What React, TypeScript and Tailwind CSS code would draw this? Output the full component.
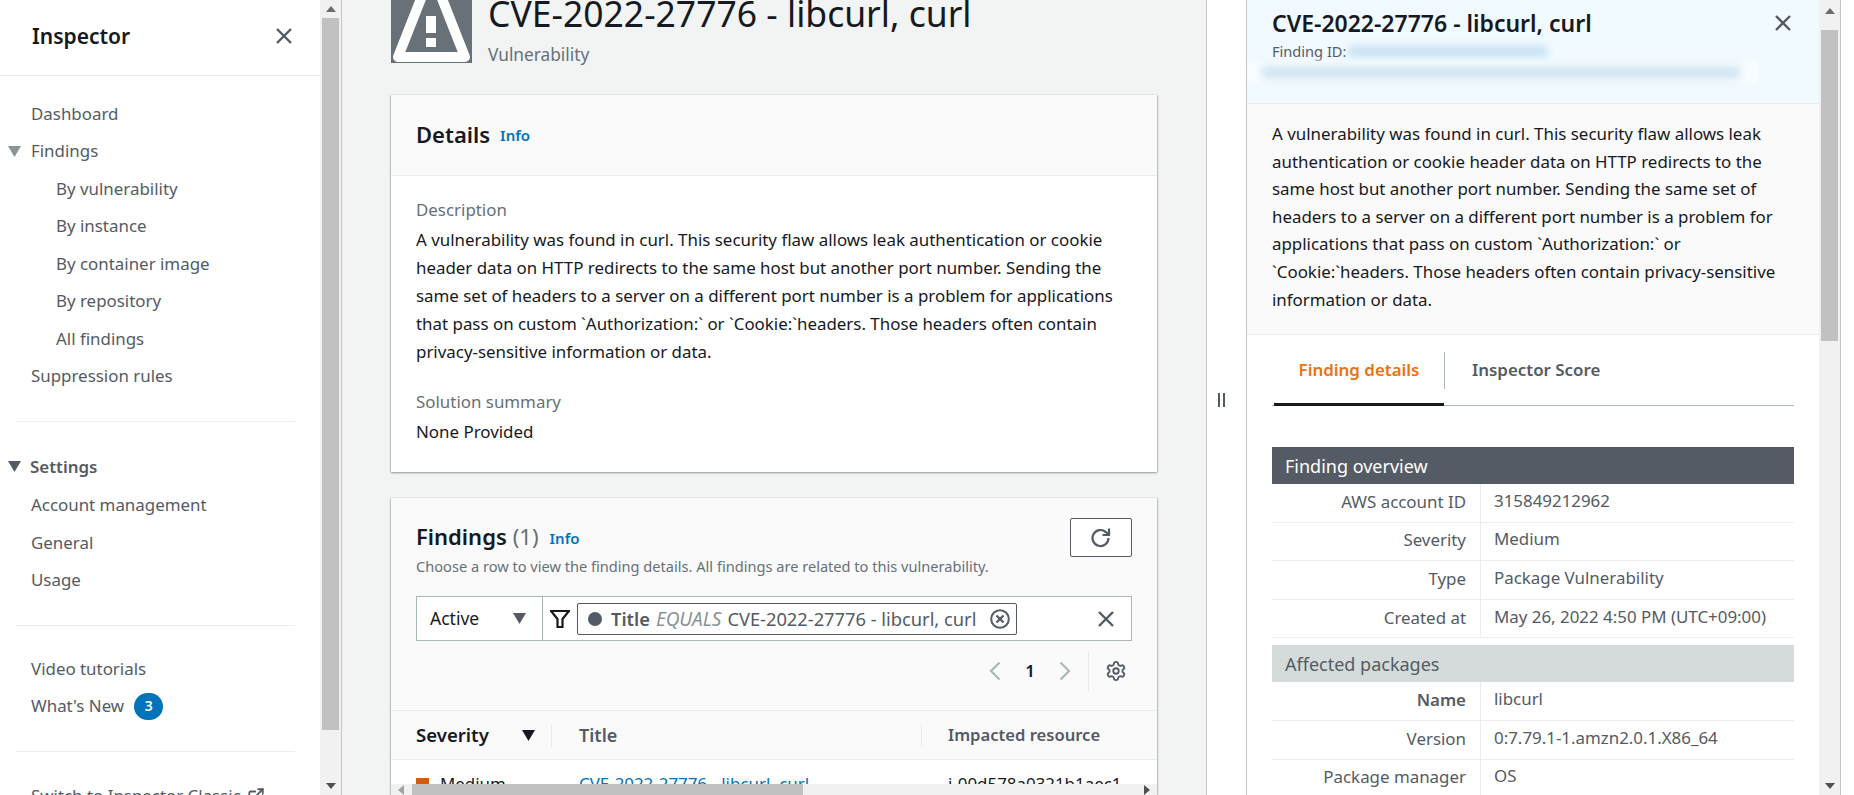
import { ExternalLink, Settings } from "lucide-react";

const subItems = ["By vulnerability", "By instance", "By container image", "By repository", "All findings"];

const overviewRows = [
  ["AWS account ID", "315849212962"],
  ["Severity", "Medium"],
  ["Type", "Package Vulnerability"],
  ["Created at", "May 26, 2022 4:50 PM (UTC+09:00)"],
];

const packageRows = [
  ["Name", "libcurl"],
  ["Version", "0:7.79.1-1.amzn2.0.1.X86_64"],
  ["Package manager", "OS"],
];

function NavLink({ label, indent }: { label: string; indent?: boolean }) {
  return (
    <div className={`h-[37.5px] flex items-center text-[#545b64] ${indent ? "pl-[56px]" : "pl-[31px]"}`}>
      {label}
    </div>
  );
}

function Caret({ className }: { className: string }) {
  return (
    <svg viewBox="0 0 13 11" className={className} fill="currentColor">
      <path d="M0 0h13L6.5 11z" />
    </svg>
  );
}

function CloseIcon({ className }: { className: string }) {
  return (
    <svg viewBox="0 0 18 18" className={className} fill="none" stroke="currentColor" strokeWidth="2.4">
      <path d="M2 2l14 14M16 2L2 16" />
    </svg>
  );
}

function ArrowUp() {
  return (
    <svg viewBox="0 0 10 6" className="w-[10px] h-[6px]" fill="#6b6b6b">
      <path d="M5 0l5 6H0z" />
    </svg>
  );
}

function ArrowDown() {
  return (
    <svg viewBox="0 0 10 6" className="w-[10px] h-[6px]" fill="#505050">
      <path d="M0 0h10L5 6z" />
    </svg>
  );
}

function DetailRow({ label, value, bold }: { label: string; value: string; bold?: boolean }) {
  return (
    <div className="flex h-[38.6px] border-b border-[#eaeded] shrink-0">
      <div className={`w-[209px] pr-[14px] pb-[2px] flex items-center justify-end border-r border-[#eaeded] text-[#545b64] ${bold ? "font-semibold" : ""}`}>
        {label}
      </div>
      <div className="pl-[13px] flex items-center pb-[4px] text-[#545b64]">{value}</div>
    </div>
  );
}

export default function App() {
  return (
    <div className="flex h-screen overflow-hidden bg-white font-['Noto_Sans',sans-serif] text-[16.9px] leading-[28px] text-[#16191f]">
      {/* left nav */}
      <aside className="w-[320px] shrink-0 overflow-hidden">
        <div className="h-[76px] flex items-center justify-between pl-[32px] pr-[27px] pb-[3px] border-b border-[#eaeded]">
          <span className="text-[21px] font-semibold">Inspector</span>
          <CloseIcon className="w-[18px] h-[18px] text-[#545b64]" />
        </div>
        <nav className="pt-[19px]">
          <NavLink label="Dashboard" />
          <div className="h-[37.5px] flex items-center pl-[8px] text-[#545b64]">
            <Caret className="w-[13px] h-[11px] mr-[10px] text-[#879596]" />
            Findings
          </div>
          {subItems.map((s) => (
            <NavLink key={s} label={s} indent />
          ))}
          <NavLink label="Suppression rules" />
          <hr className="mx-[16px] w-[279px] mt-[26px] mb-[27px] border-[#eaeded]" />
          <div className="h-[37.5px] flex items-center pl-[8px] pb-[2px] text-[#545b64] font-semibold">
            <Caret className="w-[13px] h-[11px] mr-[9px] text-[#545b64]" />
            Settings
          </div>
          <NavLink label="Account management" />
          <NavLink label="General" />
          <NavLink label="Usage" />
          <hr className="mx-[16px] w-[279px] mt-[26px] mb-[24px] border-[#eaeded]" />
          <NavLink label="Video tutorials" />
          <div className="h-[37.5px] flex items-center pl-[31px] text-[#545b64]">
            What's New
            <span className="ml-[10px] w-[29px] h-[27px] rounded-full bg-[#0073bb] text-white text-[14px] font-semibold flex items-center justify-center">
              3
            </span>
          </div>
          <hr className="mx-[16px] w-[279px] mt-[26px] mb-[25px] border-[#eaeded]" />
          <div className="h-[37.5px] flex items-center pl-[31px] text-[#545b64]">
            Switch to Inspector Classic
            <ExternalLink className="ml-[6px] w-[18px] h-[18px]" strokeWidth={2.4} />
          </div>
        </nav>
      </aside>

      {/* left scrollbar */}
      <div className="w-[22px] shrink-0 bg-[#f1f1f1] border-r border-[#c6c6c6] flex flex-col items-center">
        <div className="h-[18px] flex items-center justify-center">
          <ArrowUp />
        </div>
        <div className="w-[17px] h-[712px] bg-[#c1c1c1]" />
        <div className="mt-auto h-[18px] flex items-center justify-center">
          <ArrowDown />
        </div>
      </div>

      {/* main column */}
      <main className="w-[865px] shrink-0 h-screen bg-[#f2f3f3] border-r border-[#c6c6c6] pl-[49px] pr-[49px] flex flex-col overflow-hidden">
        <div className="flex h-[100px] -mt-[37px] shrink-0">
          <svg viewBox="0 0 81 100" className="w-[81px] h-[100px] shrink-0 bg-[#687078]">
            <path d="M40.5 9L7 94h67z" fill="none" stroke="white" strokeWidth="10" strokeLinejoin="round" />
            <path d="M35 53h10v17H35zM35 75h10v9H35z" fill="white" />
          </svg>
          <div className="ml-[16px] pt-[20px]">
            <h1 className="text-[35.5px] leading-[60px] text-[#16191f] whitespace-nowrap">CVE-2022-27776 - libcurl, curl</h1>
            <div className="text-[17.3px] text-[#687078] -mt-[2px]">Vulnerability</div>
          </div>
        </div>

        <section className="mt-[32px] h-[377px] shrink-0 bg-white shadow-[0_1px_2px_rgba(0,28,36,0.4),1px_0_1px_rgba(0,28,36,0.1),-1px_0_1px_rgba(0,28,36,0.1)]">
          <div className="h-[81px] bg-[#fafafa] border-b border-[#eaeded] flex items-center pl-[25px] pb-[3px]">
            <h2 className="text-[22px] font-semibold">Details</h2>
            <span className="ml-[10px] mt-[3px] text-[15px] font-semibold text-[#0073bb]">Info</span>
          </div>
          <div className="pl-[25px] pr-[34px] pt-[20px]">
            <div className="text-[#687078]">Description</div>
            <p className="mt-[2px]">
              A vulnerability was found in curl. This security flaw allows leak authentication or cookie header data on HTTP redirects to the same host but another port number. Sending the same set of headers to a server on a different port number is a problem for applications that pass on custom `Authorization:` or `Cookie:`headers. Those headers often contain privacy-sensitive information or data.
            </p>
            <div className="mt-[22px] text-[#687078]">Solution summary</div>
            <div className="mt-[2px]">None Provided</div>
          </div>
        </section>

        <section className="mt-[26px] flex-1 min-h-0 flex flex-col overflow-hidden bg-white shadow-[0_1px_2px_rgba(0,28,36,0.4),1px_0_1px_rgba(0,28,36,0.1),-1px_0_1px_rgba(0,28,36,0.1)]">
          <div className="h-[213px] shrink-0 bg-[#fafafa] border-b border-[#eaeded] px-[25px]">
            <div className="flex justify-between pt-[20px]">
              <div>
                <div className="flex items-center h-[36px]">
                  <h2 className="text-[22px] font-semibold">Findings</h2>
                  <span className="ml-[6px] text-[22px] text-[#687078]">(1)</span>
                  <span className="ml-[11px] mt-[3px] text-[15px] font-semibold text-[#0073bb]">Info</span>
                </div>
                <div className="text-[14.6px] leading-[24px] text-[#687078]">
                  Choose a row to view the finding details. All findings are related to this vulnerability.
                </div>
              </div>
              <button className="w-[62px] h-[39px] bg-white border border-[#545b64] rounded-[2px] flex items-center justify-center text-[#545b64]">
                <svg viewBox="0 0 22 22" className="w-[22px] h-[22px]" fill="none" stroke="currentColor" strokeWidth="2.2">
                  <path d="M18.5 11a8 8 0 1 1-2.6-5.9L18.5 7.5" />
                  <path d="M19 1.5V8h-6.5" />
                </svg>
              </button>
            </div>
            <div className="mt-[18px] h-[45px] bg-white border border-[#aab7b8] flex items-center">
              <div className="w-[126px] h-full border-r border-[#aab7b8] flex items-center justify-between pl-[13px] pr-[16px] pb-[1px] text-[17.5px]">
                Active
                <Caret className="w-[13px] h-[11px] text-[#545b64]" />
              </div>
              <svg viewBox="0 0 20 20" className="ml-[7px] w-[20px] h-[20px] text-[#16191f]" fill="none" stroke="currentColor" strokeWidth="2.2">
                <path d="M1 2h18l-6.5 8v8h-5v-8z" />
              </svg>
              <div className="ml-[7px] w-[440px] h-[32px] border border-[#545b64] rounded-[2px] flex items-center pl-[10px] text-[18.3px] text-[#545b64] whitespace-nowrap">
                <span className="w-[14px] h-[14px] rounded-full bg-[#545b64] mr-[9px]" />
                <span className="font-semibold">Title</span>
                <span className="italic text-[19px] text-[#879596] ml-[6px]">EQUALS</span>
                <span className="ml-[6px]">CVE-2022-27776 - libcurl, curl</span>
                <svg viewBox="0 0 20 20" className="ml-auto mr-[6px] w-[20px] h-[20px]" fill="none" stroke="currentColor" strokeWidth="2">
                  <circle cx="10" cy="10" r="8.8" />
                  <path d="M6.5 6.5l7 7M13.5 6.5l-7 7" strokeWidth="2.4" />
                </svg>
              </div>
              <CloseIcon className="ml-auto mr-[16px] w-[18px] h-[18px] text-[#545b64]" />
            </div>
            <div className="mt-[10px] h-[40px] flex items-center justify-end text-[#16191f]">
              <svg viewBox="0 0 12 20" className="w-[12px] h-[20px]" fill="none" stroke="#aab7b8" strokeWidth="2.2">
                <path d="M10.5 1.5L2 10l8.5 8.5" />
              </svg>
              <span className="mx-[24px] font-semibold">1</span>
              <svg viewBox="0 0 12 20" className="w-[12px] h-[20px]" fill="none" stroke="#aab7b8" strokeWidth="2.2">
                <path d="M1.5 1.5L10 10l-8.5 8.5" />
              </svg>
              <div className="ml-[17px] w-px h-[40px] bg-[#eaeded]" />
              <Settings className="ml-[16px] mr-[5px] w-[22px] h-[22px] text-[#545b64]" strokeWidth={2} />
            </div>
          </div>

          <div className="h-[49px] shrink-0 bg-[#fafafa] border-b border-[#eaeded] flex items-center font-semibold">
            <div className="w-[161px] h-[23px] border-r border-[#eaeded] pl-[25px] flex items-center justify-between pr-[16px] text-[18.6px]">
              Severity
              <Caret className="w-[13px] h-[11px] text-[#16191f]" />
            </div>
            <div className="w-[370px] h-[23px] border-r border-[#eaeded] pl-[27px] flex items-center text-[18px] text-[#545b64]">Title</div>
            <div className="pl-[26px] flex items-center text-[16.6px] text-[#545b64]">Impacted resource</div>
          </div>

          <div className="flex-1 min-h-0 overflow-hidden flex items-start pt-[10px]">
            <div className="w-[161px] pl-[25px] flex items-center">
              <span className="w-[13px] h-[13px] bg-[#d45b07] mr-[11px]" />
              Medium
            </div>
            <div className="w-[370px] pl-[27px] text-[#0073bb] underline whitespace-nowrap">CVE-2022-27776 - libcurl, curl</div>
            <div className="pl-[26px]">i-00d578a0321b1aec1</div>
          </div>

          <div className="h-[11px] shrink-0 bg-[#f1f1f1] flex items-center">
            <svg viewBox="0 0 6 10" className="ml-[7px] w-[6px] h-[10px]" fill="#a3a3a3">
              <path d="M0 5l6-5v10z" />
            </svg>
            <div className="ml-[8px] w-[391px] h-full bg-[#c1c1c1]" />
            <svg viewBox="0 0 6 10" className="ml-auto mr-[7px] w-[6px] h-[10px]" fill="#505050">
              <path d="M6 5L0 0v10z" />
            </svg>
          </div>
        </section>
      </main>

      {/* splitter */}
      <div className="w-[39px] shrink-0 flex items-center justify-center pt-[5px] pr-[11px]">
        <div className="w-[2px] h-[14px] bg-[#545b64] mr-[3px]" />
        <div className="w-[2px] h-[14px] bg-[#545b64]" />
      </div>

      {/* details panel */}
      <aside className="w-[573px] shrink-0 border-l border-[#c6c6c6] overflow-hidden flex flex-col text-[#16191f]">
        <div className="h-[104px] shrink-0 bg-[#f1faff] border-b border-[#eaeded] pl-[25px] pr-[27px] pt-[4px]">
          <div className="flex justify-between items-center h-[38px]">
            <h2 className="text-[23px] font-semibold whitespace-nowrap">CVE-2022-27776 - libcurl, curl</h2>
            <CloseIcon className="w-[18px] h-[18px] text-[#545b64]" />
          </div>
          <div className="flex items-center h-[18px] text-[14.6px] leading-[18px] text-[#545b64]">
            Finding ID:
            <div className="ml-[3px] w-[198px] h-[11px] bg-[#c4e0f2] blur-[4px]" />
          </div>
          <div className="-ml-[29px] w-[515px] h-[22px] mt-[1px] bg-[#f9fdff] blur-[2px] flex items-center justify-center">
            <div className="w-[478px] h-[11px] bg-[#c8e0ef] blur-[4px]" />
          </div>
        </div>

        <div className="h-[231px] shrink-0 bg-[#fafafa] border-b border-[#eaeded] pl-[25px] pr-[25px] pt-[16px]">
          <p className="leading-[27.6px]">
            A vulnerability was found in curl. This security flaw allows leak authentication or cookie header data on HTTP redirects to the same host but another port number. Sending the same set of headers to a server on a different port number is a problem for applications that pass on custom `Authorization:` or `Cookie:`headers. Those headers often contain privacy-sensitive information or data.
          </p>
        </div>

        <div className="flex-1 min-h-0 overflow-hidden pl-[25px] pr-[25px]">
          <div className="h-[71px] flex border-b border-[#aab7b8] font-semibold">
            <div className="relative ml-[2px] w-[170px] flex items-center justify-center text-[#ec7211]">
              Finding details
              <span className="absolute left-0 right-0 -bottom-px h-[3px] bg-[#16191f]" />
            </div>
            <div className="w-px h-[37px] self-center bg-[#aab7b8]" />
            <div className="pl-[27px] flex items-center text-[#545b64]">Inspector Score</div>
          </div>

          <div className="mt-[41px] h-[37px] bg-[#545b64] text-[18px] text-white flex items-center pl-[13px]">Finding overview</div>
          {overviewRows.map(([label, value]) => (
            <DetailRow key={label} label={label} value={value} />
          ))}
          <div className="mt-[7px] h-[37px] bg-[#d5dbdb] text-[18px] text-[#545b64] flex items-center pl-[13px]">Affected packages</div>
          {packageRows.map(([label, value], i) => (
            <DetailRow key={label} label={label} value={value} bold={i === 0} />
          ))}
        </div>
      </aside>

      {/* right scrollbar */}
      <div className="w-[22px] shrink-0 bg-[#f1f1f1] border-r border-[#c6c6c6] flex flex-col items-center">
        <div className="h-[30px] flex items-center justify-center pb-[8px]">
          <ArrowUp />
        </div>
        <div className="w-[17px] h-[311px] bg-[#c1c1c1]" />
        <div className="mt-auto h-[18px] flex items-center justify-center">
          <ArrowDown />
        </div>
      </div>
    </div>
  );
}
